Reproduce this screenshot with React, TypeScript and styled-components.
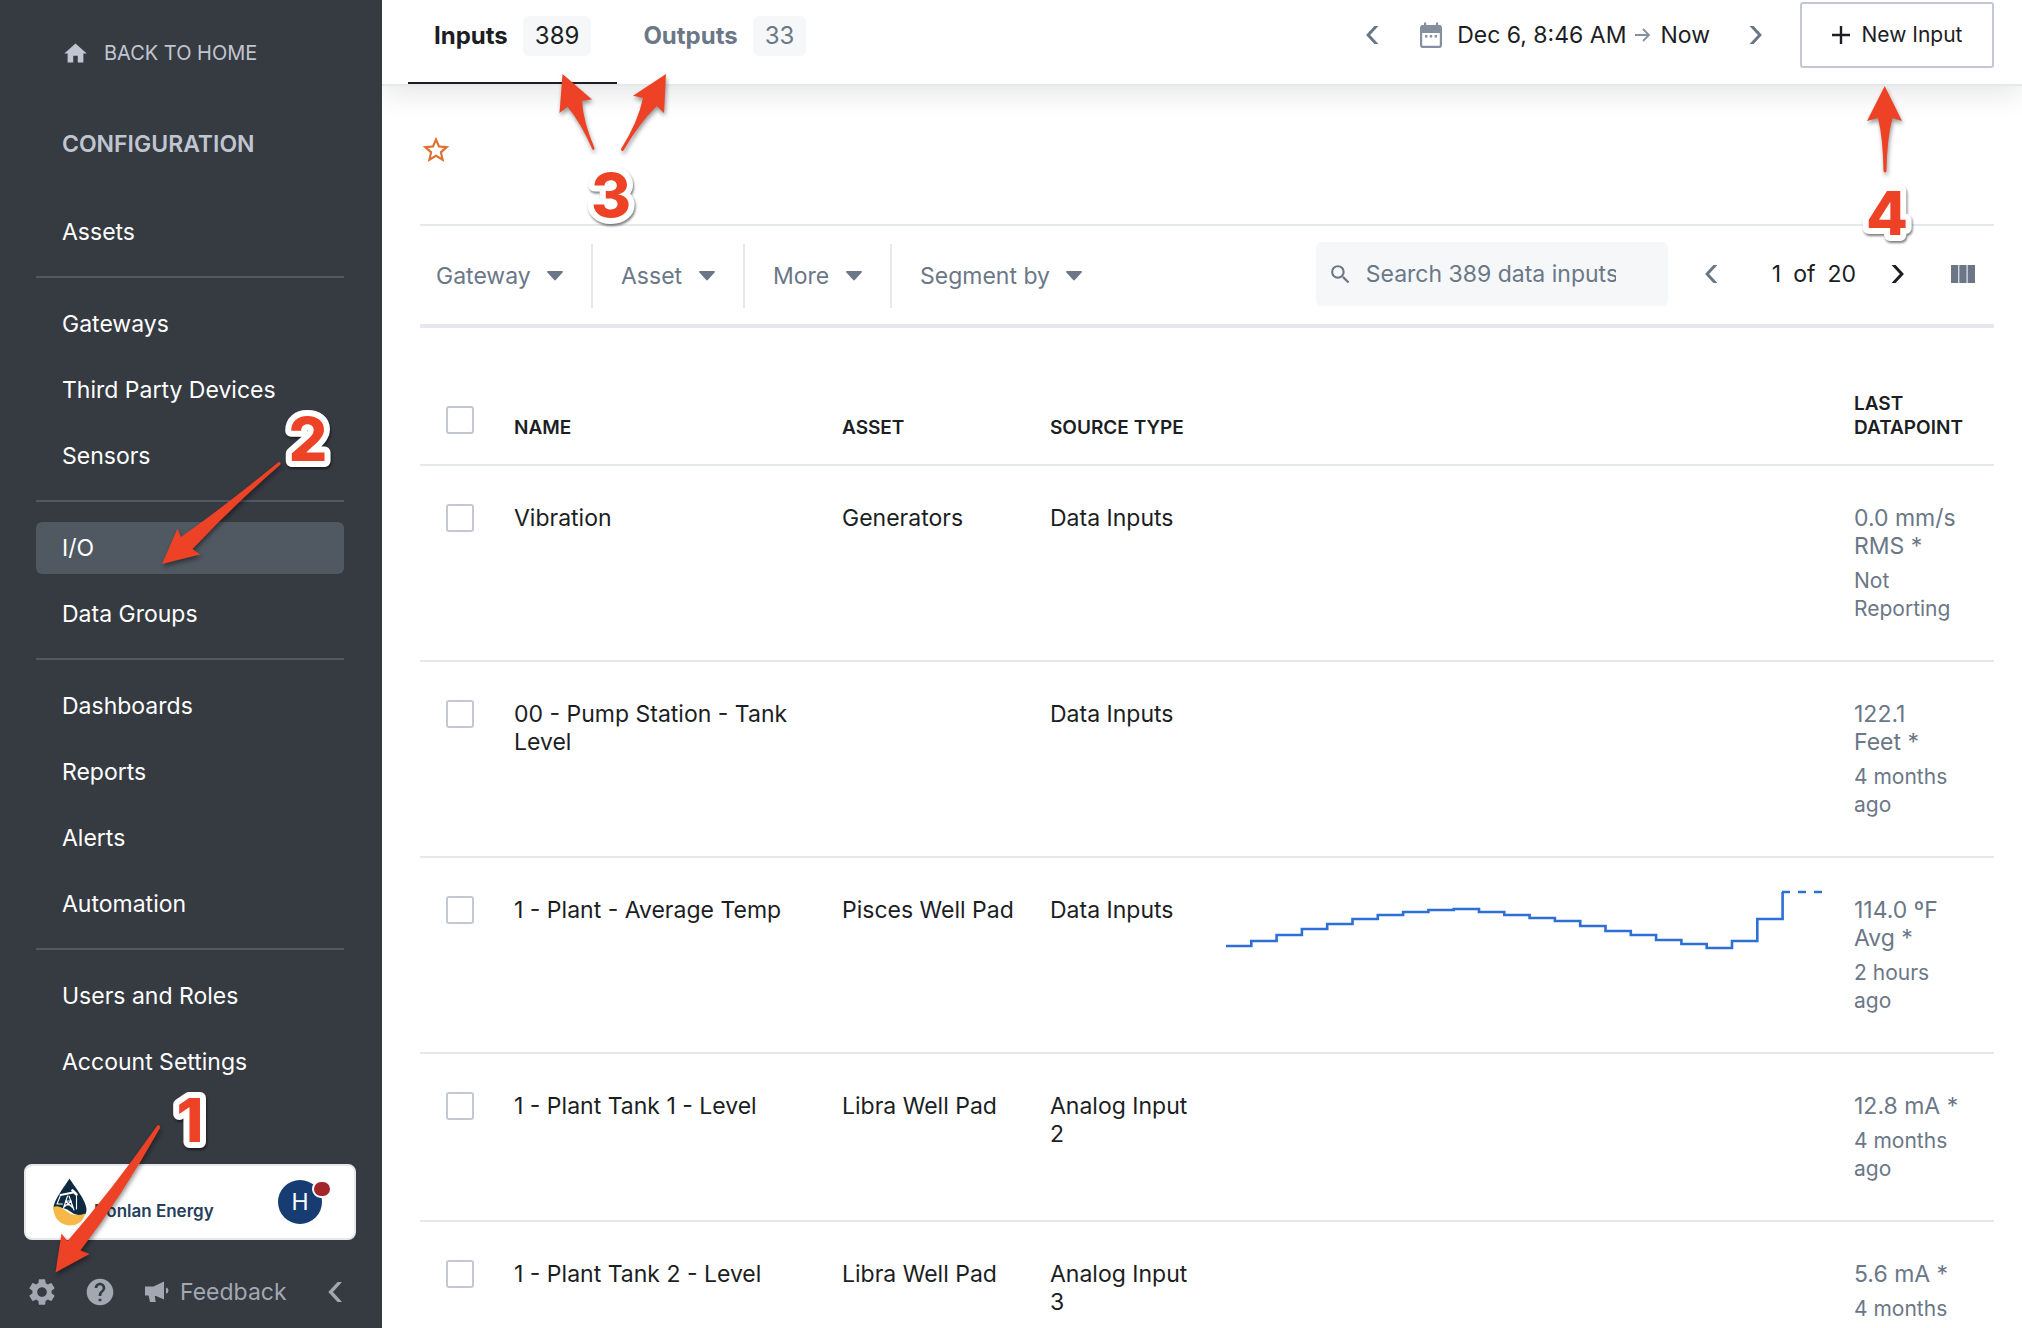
import React from "react";
import styled, { createGlobalStyle } from "styled-components";
import { MdHome, MdSettings, MdHelp, MdSearch, MdStarBorder } from "react-icons/md";

const color = {
  ink: "#1b1e23",
  muted: "#6b7787",
  line: "#e5e9ed",
  field: "#f5f7f9",
  control: "#c1c8d1",
  side: "#363a41",
  sideActive: "#505861",
  sideMuted: "#c0c6d1",
  sideIcon: "#a2a8b2",
  mark: "#ee4226",
};

const Global = createGlobalStyle`
  * { box-sizing: border-box; }
  body {
    margin: 0;
    background: #fff;
    color: ${color.ink};
    font-family: Inter, "Liberation Sans", sans-serif;
    font-size: 23px;
    line-height: 28px;
  }
  button, input, select {
    margin: 0;
    padding: 0;
    border: 0;
    background: none;
    color: inherit;
    font: inherit;
  }
  button { cursor: pointer; }
  a { color: inherit; text-decoration: none; }
  svg { display: block; flex: none; }
`;

const Shell = styled.div`
  position: relative;
  display: flex;
  height: 100vh;
  overflow: hidden;
`;

/* ---------- Sidebar ---------- */

const Sidebar = styled.aside`
  display: flex;
  flex-direction: column;
  flex: 0 0 382px;
  padding: 33px 26px 16px 24px;
  background: ${color.side};
  color: #fff;
`;

const BackLink = styled.a`
  display: flex;
  align-items: center;
  gap: 15px;
  height: 40px;
  padding-left: 38px;
  color: ${color.sideMuted};
  font-size: 20px;
`;

const SideTitle = styled.h2`
  margin: 51px 0 42px;
  padding-left: 38px;
  color: ${color.sideMuted};
  font-size: 23px;
  font-weight: 600;
  line-height: 40px;
`;

const NavGroup = styled.ul`
  display: flex;
  flex-direction: column;
  gap: 14px;
  margin: 0 12px;
  padding: 0 0 18px;
  list-style: none;

  & + & {
    padding-top: 20px;
    border-top: 2px solid ${color.sideActive};
  }
`;

const NavLink = styled.a<{ $active?: boolean }>`
  display: block;
  padding: 12px 26px;
  border-radius: 6px;
  background: ${(p) => (p.$active ? color.sideActive : "transparent")};
`;

const AccountCard = styled.div`
  display: flex;
  align-items: center;
  justify-content: space-between;
  height: 76px;
  margin-top: auto;
  padding: 0 32px 0 26px;
  border: 2px solid ${color.line};
  border-radius: 8px;
  background: #fff;
`;

const Company = styled.div`
  display: flex;
  align-items: center;
  gap: 6px;
  color: #24405a;
  font-size: 17px;
  font-weight: 600;

  span { padding-top: 18px; }
`;

const Avatar = styled.button`
  position: relative;
  width: 44px;
  height: 44px;
  border-radius: 50%;
  background: #163c72;
  color: #fff;
`;

const Alert = styled.span`
  position: absolute;
  top: 0;
  right: -10px;
  width: 20px;
  height: 18px;
  border: 2px solid #fff;
  border-radius: 9px;
  background: #a3262a;
`;

const SideFooter = styled.div`
  display: flex;
  align-items: center;
  height: 40px;
  margin-top: 32px;
  padding-left: 2px;
  color: ${color.sideIcon};
`;

const FooterButton = styled.button<{ $space?: number }>`
  display: flex;
  align-items: center;
  gap: 10px;
  margin-right: ${(p) => p.$space ?? 0}px;

  &:last-child { margin: 0 10px 0 auto; }
`;

/* ---------- Main area ---------- */

const Main = styled.main`
  flex: 1;
  min-width: 0;
  overflow-y: auto;
  scrollbar-width: none;
`;

const Header = styled.header`
  display: flex;
  justify-content: space-between;
  height: 86px;
  padding: 0 28px 0 26px;
  border-bottom: 2px solid ${color.line};
  box-shadow: 0 8px 28px rgba(0, 0, 0, 0.1);
`;

const Tabs = styled.nav`
  display: flex;
`;

const Tab = styled.a<{ $active?: boolean }>`
  display: flex;
  gap: 15px;
  padding: 16px 26px 0;
  border-bottom: 2px solid ${(p) => (p.$active ? color.ink : "transparent")};
  color: ${(p) => (p.$active ? color.ink : color.muted)};
  font-size: 24px;
  font-weight: 700;
  line-height: 40px;
`;

const Count = styled.span`
  align-self: flex-start;
  padding: 0 12px;
  border-radius: 6px;
  background: ${color.field};
  font-weight: 400;
`;

const HeaderTools = styled.div`
  display: flex;
  align-items: center;
  align-self: flex-start;
  gap: 33px;
  height: 66px;
  margin-top: 2px;
`;

const IconButton = styled.button<{ $tone?: string }>`
  display: grid;
  place-items: center;
  width: 24px;
  height: 40px;
  color: ${(p) => p.$tone ?? color.muted};
`;

const DateRange = styled.button`
  display: flex;
  align-items: center;
  gap: 9px;

  svg:first-child { margin: 0 6px 0 2px; }
`;

const NewButton = styled.button`
  display: flex;
  align-items: center;
  justify-content: center;
  gap: 12px;
  width: 194px;
  height: 66px;
  border: 2px solid ${color.control};
  border-radius: 3px;
  font-size: 21px;
`;

const Content = styled.div`
  padding: 0 28px 0 38px;
`;

const FavoriteBar = styled.div`
  display: flex;
  align-items: center;
  height: 140px;
  padding-bottom: 10px;
  border-bottom: 2px solid ${color.line};
`;

const Favorite = styled.button`
  color: #e0702f;
`;

const Toolbar = styled.div`
  display: flex;
  justify-content: space-between;
  padding: 16px 0;
  border-bottom: 4px solid ${color.line};
  color: ${color.muted};
`;

const Filters = styled.div`
  display: flex;
  padding-top: 2px;
`;

const Filter = styled.label`
  display: grid;
  align-items: center;
  height: 64px;
  padding: 0 28px;

  &:first-child { padding-left: 16px; }
  & + & { border-left: 2px solid ${color.line}; }

  select {
    grid-area: 1 / 1;
    padding-right: 32px;
    appearance: none;
    cursor: pointer;
  }
  svg {
    grid-area: 1 / 1;
    justify-self: end;
    pointer-events: none;
  }
`;

const ToolbarEnd = styled.div`
  display: flex;
  align-items: center;
  height: 64px;
  padding-right: 19px;
`;

const Search = styled.label`
  display: flex;
  align-items: center;
  gap: 13px;
  width: 352px;
  height: 64px;
  margin-right: 32px;
  padding: 0 52px 0 12px;
  border-radius: 6px;
  background: ${color.field};

  input {
    flex: 1;
    min-width: 0;
    outline: 0;
  }
  input::placeholder {
    color: ${color.muted};
    opacity: 1;
  }
`;

const PageText = styled.span`
  display: flex;
  gap: 12px;
  margin: 0 29px 0 48px;
  color: ${color.ink};
`;

const ColumnsButton = styled(IconButton)`
  margin-left: 42px;
`;

/* ---------- Table ---------- */

const Table = styled.table`
  width: 100%;
  margin-top: 36px;
  table-layout: fixed;
  border-collapse: separate;
  border-spacing: 0;
`;

const Col = styled.col<{ $width?: number }>`
  width: ${(p) => (p.$width ? `${p.$width}px` : "auto")};
`;

const Th = styled.th`
  padding: 28px 24px 24px 0;
  border-bottom: 2px solid ${color.line};
  font-size: 19px;
  font-weight: 600;
  line-height: 24px;
  text-align: left;
  text-transform: uppercase;
  vertical-align: bottom;
`;

const Td = styled.td`
  padding: 38px 24px 37px 0;
  border-bottom: 2px solid ${color.line};
  vertical-align: top;
`;

const CheckTh = styled(Th)`
  padding: 28px 0 30px 26px;
`;

const CheckTd = styled(Td)`
  padding-left: 26px;
`;

const ChartTd = styled(Td)`
  padding: 32px 30px 0 0;

  svg { width: 100%; }
`;

const Check = styled.input`
  display: block;
  width: 28px;
  height: 28px;
  border: 2px solid ${color.control};
  border-radius: 3px;
  background: #fff;
  appearance: none;
`;

const Reading = styled.div`
  color: ${color.muted};
`;

const Age = styled.div`
  margin-top: 7px;
  color: ${color.muted};
  font-size: 21px;
`;

/* ---------- Callouts ---------- */

const CalloutLayer = styled.svg`
  position: absolute;
  top: 0;
  left: 0;
  overflow: visible;
  pointer-events: none;
  fill: ${color.mark};
`;

const CalloutArrows = styled.g`
  filter: drop-shadow(1px 3px 2px rgba(0, 0, 0, 0.4));
`;

const CalloutNumber = styled.text`
  font: 800 61px Inter, "Liberation Sans", sans-serif;
  stroke: #fff;
  stroke-width: 12px;
  stroke-linejoin: round;
  paint-order: stroke fill;
  text-anchor: middle;
  filter: drop-shadow(1px 2px 1px rgba(0, 0, 0, 0.5));
`;

/* ---------- Icons ---------- */

const Chevron = ({ dir, size = 22 }: { dir: "left" | "right"; size?: number }) => (
  <svg width={size} height={size} viewBox="0 0 24 24" fill="none" stroke="currentColor" strokeWidth="4">
    <path d={dir === "left" ? "M17.5 -1 5.5 12 17.5 25" : "M6.5 -1 18.5 12 6.5 25"} />
  </svg>
);

const Caret = () => (
  <svg width="16" height="10" viewBox="0 0 16 10" fill="currentColor">
    <path d="M1 0H15Q16.6 0.4 15.6 1.6L8.8 9Q8 9.8 7.2 9L0.4 1.6Q-0.6 0.4 1 0Z" />
  </svg>
);

const Calendar = () => (
  <svg width="22" height="28" viewBox="0 0 22 28">
    <rect x="1.1" y="5" width="19.8" height="20.9" rx="2" fill="none" stroke="#85909e" strokeWidth="2.2" />
    <path fill="#85909e" d="M1 4.500h20V12H1zM4 1.500h2.200v4H4zM16 1.500h2.200v4H16zM5 14h2.400v2.400H5zM9.800 14h2.400v2.400H9.800zM14.600 14H17v2.400h-2.400z" />
  </svg>
);

const Arrow = () => (
  <svg width="16" height="16" viewBox="0 0 16 16" fill="none" stroke="#85909e" strokeWidth="1.8">
    <path d="M0 8h14M8 2l6 6-6 6" />
  </svg>
);

const Plus = () => (
  <svg width="18" height="18" viewBox="0 0 18 18" fill="none" stroke="currentColor" strokeWidth="2.4">
    <path d="M9 0v18M0 9h18" />
  </svg>
);

const Megaphone = () => (
  <svg width="26" height="24" viewBox="0 0 26 24" fill="currentColor">
    <path d="M1 6.5H9.5L20 1.5V19.5L12 15.9H10.8L11.7 21.9H6L4.6 15.5H1ZM22 7.5Q24.5 8 24.5 10.5T22 13.5Z" />
  </svg>
);

const Columns = () => (
  <svg width="24" height="18" viewBox="0 0 24 18" fill="currentColor">
    <path d="M0 0H7.300V18H0ZM8.300 0H15.600V18H8.300ZM16.600 0H24V18H16.600Z" />
  </svg>
);

const Logo = () => (
  <svg width="36" height="48" viewBox="0 0 36 48">
    <path
      fill="#0d2a40"
      d="M17.5 0.5C22 8 34 22 34.500 31Q34.500 34 33.500 36Q30.500 37.500 26.500 37Q21.500 36.500 17.500 33T5 29.500Q3 29.500 1.500 30.500C1.500 22 13 8 17.500 0.500Z"
    />
    <path fill="#f6b846" d="M1 29Q6 27 10 30 14 33 18 35.500 25 38.500 33.500 35.500 29.500 47.500 18 47.500 2.500 46.500 1 29Z" />
    <g fill="none" stroke="#fff" strokeLinecap="round">
      <path strokeWidth="2" d="M8.500 17 21 14.500" />
      <path strokeWidth="2.6" d="M20.500 12.500 24.500 16.500" />
      <path strokeWidth="1.1" d="M15.500 18 11.500 30M17 18l5 14M13.500 23h6M12.500 27h8M13.500 23l7.500 7M19.500 23l-7.500 6M8 18.500 5 26M5.500 26h5M24.500 18v13" />
    </g>
  </svg>
);

/* ---------- Data ---------- */

const navGroups = [
  ["Assets"],
  ["Gateways", "Third Party Devices", "Sensors"],
  ["I/O", "Data Groups"],
  ["Dashboards", "Reports", "Alerts", "Automation"],
  ["Users and Roles", "Account Settings"],
];

const filters = ["Gateway", "Asset", "More", "Segment by"];

const temperature = [
  56, 51, 45, 39, 34, 29, 25, 22, 20, 19, 22, 25, 28, 31, 36, 41, 45, 50, 54, 58, 51, 29,
];

type Row = {
  name: string;
  asset: string;
  source: string;
  value: string;
  unit: string;
  age: string;
  series?: number[];
};

const rows: Row[] = [
  { name: "Vibration", asset: "Generators", source: "Data Inputs", value: "0.0 mm/s", unit: "RMS", age: "Not Reporting" },
  { name: "00 - Pump Station - Tank Level", asset: "", source: "Data Inputs", value: "122.1", unit: "Feet", age: "4 months ago" },
  {
    name: "1 - Plant - Average Temp",
    asset: "Pisces Well Pad",
    source: "Data Inputs",
    value: "114.0 ºF",
    unit: "Avg",
    age: "2 hours ago",
    series: temperature,
  },
  { name: "1 - Plant Tank 1 - Level", asset: "Libra Well Pad", source: "Analog Input 2", value: "12.8", unit: "mA", age: "4 months ago" },
  { name: "1 - Plant Tank 2 - Level", asset: "Libra Well Pad", source: "Analog Input 3", value: "5.6", unit: "mA", age: "4 months ago" },
];

const Sparkline = ({ values }: { values: number[] }) => {
  const step = 25.3;
  const path = values
    .map((y, i) => `${i ? "V" : "M0 "}${y}H${((i + 1) * step).toFixed(1)}`)
    .join("");
  return (
    <svg viewBox="0 0 598 62" fill="none" stroke="#2d6fd6" strokeWidth="2.6">
      <path d={`${path}V2`} />
      <path d="M556 2H598" strokeDasharray="8 8" />
    </svg>
  );
};

const arrows = [
  "M162 564 177.5 528.5 181 537Q225 506 278 462.5Q281 461 280.5 464.5Q233 506 192.5 549L200 554.5z",
  "M55.5 1272.5 61.5 1233.5 67.5 1241Q112 1190 157 1126Q160 1123.5 160 1128Q122 1196 80.5 1250.5L89.5 1254z",
  "M562.5 74 592 99.5 582 100.7Q583 121 594.5 148Q594 151 592.5 149.5Q581 123 567.5 106.7L559.5 113z",
  "M666 74 633 95.7 643 98Q638 122 621 149Q621 152 623.5 150.5Q640 122 656.8 106L664 113z",
  "M1884.7 86 1867 121 1878 118Q1883 138 1883.5 171Q1885 174 1886.5 171Q1887 138 1892.5 118L1902 121z",
];

const numbers = [
  { label: "1", x: 190, y: 1142 },
  { label: "2", x: 308, y: 461 },
  { label: "3", x: 611, y: 217 },
  { label: "4", x: 1887, y: 235 },
];

export default function App() {
  return (
    <Shell>
      <Global />
      <Sidebar>
        <BackLink href="#home">
          <MdHome size={27} />
          BACK TO HOME
        </BackLink>
        <SideTitle>CONFIGURATION</SideTitle>
        <nav>
          {navGroups.map((group) => (
            <NavGroup key={group[0]}>
              {group.map((item) => (
                <li key={item}>
                  <NavLink href="#" $active={item === "I/O"}>
                    {item}
                  </NavLink>
                </li>
              ))}
            </NavGroup>
          ))}
        </nav>
        <AccountCard>
          <Company>
            <Logo />
            <span>Donlan Energy</span>
          </Company>
          <Avatar>
            H<Alert />
          </Avatar>
        </AccountCard>
        <SideFooter>
          <FooterButton $space={26} aria-label="Settings">
            <MdSettings size={32} />
          </FooterButton>
          <FooterButton $space={28} aria-label="Help">
            <MdHelp size={32} />
          </FooterButton>
          <FooterButton>
            <Megaphone />
            Feedback
          </FooterButton>
          <FooterButton aria-label="Collapse menu">
            <Chevron dir="left" size={20} />
          </FooterButton>
        </SideFooter>
      </Sidebar>

      <Main>
        <Header>
          <Tabs>
            <Tab href="#inputs" $active>
              Inputs <Count>389</Count>
            </Tab>
            <Tab href="#outputs">
              Outputs <Count>33</Count>
            </Tab>
          </Tabs>
          <HeaderTools>
            <IconButton aria-label="Earlier">
              <Chevron dir="left" size={18} />
            </IconButton>
            <DateRange>
              <Calendar />
              <span>Dec 6, 8:46 AM</span>
              <Arrow />
              <span>Now</span>
            </DateRange>
            <IconButton aria-label="Later">
              <Chevron dir="right" size={18} />
            </IconButton>
            <NewButton>
              <Plus />
              New Input
            </NewButton>
          </HeaderTools>
        </Header>

        <Content>
          <FavoriteBar>
            <Favorite aria-label="Add to favorites">
              <MdStarBorder size={32} />
            </Favorite>
          </FavoriteBar>

          <Toolbar>
            <Filters>
              {filters.map((name) => (
                <Filter key={name}>
                  <select aria-label={name}>
                    <option>{name}</option>
                  </select>
                  <Caret />
                </Filter>
              ))}
            </Filters>
            <ToolbarEnd>
              <Search>
                <MdSearch size={25} />
                <input type="text" aria-label="Search" placeholder="Search 389 data inputs" />
              </Search>
              <IconButton aria-label="Previous page">
                <Chevron dir="left" size={18} />
              </IconButton>
              <PageText>
                <span>1</span>
                <span>of</span>
                <span>20</span>
              </PageText>
              <IconButton aria-label="Next page" $tone={color.ink}>
                <Chevron dir="right" size={18} />
              </IconButton>
              <ColumnsButton aria-label="Choose columns">
                <Columns />
              </ColumnsButton>
            </ToolbarEnd>
          </Toolbar>

          <Table>
            <colgroup>
              <Col $width={94} />
              <Col $width={328} />
              <Col $width={208} />
              <Col $width={176} />
              <Col />
              <Col $width={140} />
            </colgroup>
            <thead>
              <tr>
                <CheckTh>
                  <Check type="checkbox" aria-label="Select all" />
                </CheckTh>
                <Th>Name</Th>
                <Th>Asset</Th>
                <Th>Source type</Th>
                <Th />
                <Th>Last datapoint</Th>
              </tr>
            </thead>
            <tbody>
              {rows.map((row) => (
                <tr key={row.name}>
                  <CheckTd>
                    <Check type="checkbox" aria-label={`Select ${row.name}`} />
                  </CheckTd>
                  <Td>{row.name}</Td>
                  <Td>{row.asset}</Td>
                  <Td>{row.source}</Td>
                  <ChartTd>{row.series && <Sparkline values={row.series} />}</ChartTd>
                  <Td>
                    <Reading>{`${row.value} ${row.unit}\u00a0*`}</Reading>
                    <Age>{row.age}</Age>
                  </Td>
                </tr>
              ))}
            </tbody>
          </Table>
        </Content>
      </Main>

      <CalloutLayer width="1" height="1" aria-hidden="true">
        <CalloutArrows>
          {arrows.map((d) => (
            <path key={d} d={d} />
          ))}
        </CalloutArrows>
        {numbers.map((n) => (
          <CalloutNumber key={n.label} x={n.x} y={n.y}>
            {n.label}
          </CalloutNumber>
        ))}
      </CalloutLayer>
    </Shell>
  );
}
